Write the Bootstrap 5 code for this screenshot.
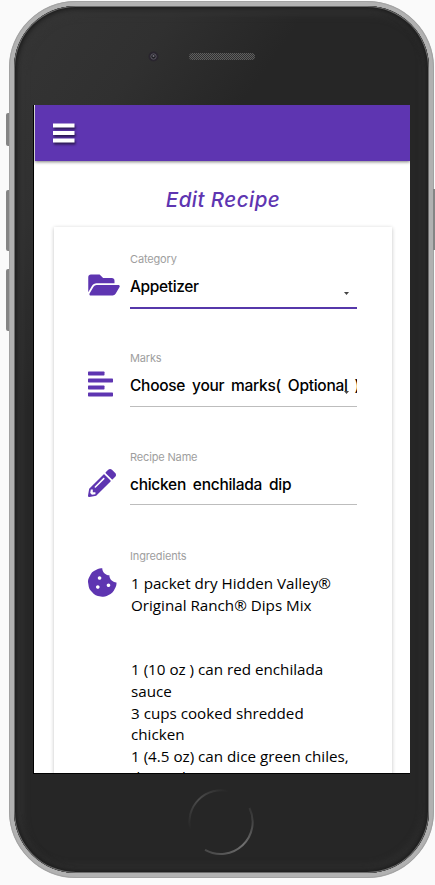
<!DOCTYPE html>
<html lang="en">
<head>
<meta charset="utf-8">
<meta name="viewport" content="width=device-width, initial-scale=1">
<title>Edit Recipe</title>
<link href="https://cdn.jsdelivr.net/npm/bootstrap@5.3.0/dist/css/bootstrap.min.css" rel="stylesheet">
<style>
  :root { --brand: #5e35b1; }
  body { background: #fafafa; height: 885px; overflow: hidden; padding: 1px 0 0 9px; }
  .phone { width: 425px; height: 877px; border: 5px solid #b1b1b1; border-radius: 67px; background: #262626;
    box-shadow: inset 0 0 0 1px #8f8f8f; outline: 1px solid #a2a2a2; outline-offset: -1px; }
  .shell { height: 100%; border-radius: 62px; padding: 99px 19px 0 19px;
    background: linear-gradient(125deg, #353535 0, #303030 16%, #262626 29%, #262626 100%);
    box-shadow: inset 0 0 0 1px #6c6c6c, inset 0 0 4px 3px #1c1c1c, inset 5px 5px 8px 2px #353535, inset -3px -5px 7px 2px #303030; }
  .side-key { position: absolute; width: 3px; background: #858585; border-radius: 2px 0 0 2px; }
  .key-mute { left: 6px; top: 113px; height: 33px; }
  .key-up { left: 6px; top: 190px; height: 61px; }
  .key-down { left: 6px; top: 269px; height: 62px; }
  .key-power { left: 433px; top: 189px; height: 61px; border-radius: 0; }
  .lens { position: absolute; left: 148px; top: 51px; width: 11px; height: 11px; }
  .speaker { position: absolute; left: 189px; top: 53px; width: 66px; height: 7px; border-radius: 4px;
    background: repeating-conic-gradient(#606060 0 25%, #303030 0 50%) 0 0 / 2px 2px; }
  .home-key { position: absolute; left: 187px; top: 788px; width: 68px; height: 68px; }
  .screen { width: 377px; height: 669px; overflow: hidden; background: #fff; border-left: 1px solid #000; border-bottom: 1px solid #000; }
  .top-bar { height: 56px; margin-left: 1px; padding: 0 0 0 18px; background: var(--brand); box-shadow: 0 1px 3px rgba(0,0,0,.5); }
  .menu-icon { filter: drop-shadow(1px 2px 1px rgba(0,0,0,.55)); }
  .page-title { font: italic 500 20.5px/28px Inter, sans-serif; color: var(--brand); margin: 25px 0 0 2px; letter-spacing: .48px; }
  .form-panel { width: 338px; height: 620px; margin: 13px 0 0 20px; padding: 22px 35px 0 34px; box-shadow: 0 1px 4px rgba(0,0,0,.24); }
  .field-row { height: 99px; }
  .icon-cell { width: 42px; padding-top: 22px; color: var(--brand); flex: none; }
  .icon-cell svg { display: block; }
  .field-body { min-width: 0; }
  .field-label { font: 11px/20px Inter, sans-serif; color: #9e9e9e; letter-spacing: -.15px; }
  .field-value { height: 38px; padding-top: 1px; font: 500 15.5px/34px Inter, sans-serif; letter-spacing: -.3px; word-spacing: 3px;
    color: #000; border-bottom: 1px solid #bdbdbd; white-space: nowrap; overflow: hidden; }
  .field-select { height: 39px; letter-spacing: -.28px; }
  .field-active { border-bottom: 2px solid #5638aa; height: 40px; letter-spacing: -.38px; }
  .field-text { letter-spacing: -.27px; }
  .caret { position: absolute; right: 8px; top: 23px; }
  .ingredients { font: 15.2px/21.6px "Open Sans", sans-serif; color: #000; white-space: pre; padding-top: 7px; margin-left: 1px; }
</style>
<script src="https://cdn.jsdelivr.net/npm/bootstrap@5.3.0/dist/js/bootstrap.bundle.min.js"></script>
</head>
<body>
<i class="side-key key-mute"></i><i class="side-key key-up"></i><i class="side-key key-down"></i>
<div class="phone">
  <div class="shell">
    <main class="screen">
      <nav class="top-bar d-flex align-items-center">
        <svg class="menu-icon" width="22" height="20" viewBox="0 0 22 20" fill="#fff"><path d="M0 .5h21.500v4H0zM0 8h21.500v4H0zM0 15.500h21.500v4H0z"/></svg>
      </nav>
      <h1 class="page-title text-center">Edit Recipe</h1>
      <section class="form-panel">
        <div class="field-row d-flex">
          <div class="icon-cell"><svg width="32" height="28" viewBox="0 0 576 512" fill="currentColor"><path d="M572.694 292.093L500.27 416.248A63.997 63.997 0 0 1 444.989 448H45.025c-18.523 0-30.064-20.093-20.731-36.093l72.424-124.155A64 64 0 0 1 152 256h399.964c18.523 0 30.064 20.093 20.73 36.093zM152 224h328v-48c0-26.510-21.490-48-48-48H272l-64-64H48C21.490 64 0 85.490 0 112v278.046l69.077-118.418C86.214 242.250 117.989 224 152 224z"/></svg></div>
          <div class="field-body flex-fill">
            <div class="field-label">Category</div>
            <div class="field-value field-active position-relative">Appetizer<svg class="caret" width="5" height="3" viewBox="0 0 5 3"><path d="M0 0h5L2.500 3z" fill="#444"/></svg></div>
          </div>
        </div>
        <div class="field-row d-flex">
          <div class="icon-cell"><svg width="25" height="28" viewBox="0 0 25 28" fill="currentColor"><rect y="1.500" width="16.500" height="4" rx=".7"/><rect y="8.500" width="25" height="4" rx=".7"/><rect y="15.500" width="16.500" height="4" rx=".7"/><rect y="22.500" width="25" height="4" rx=".7"/></svg></div>
          <div class="field-body flex-fill">
            <div class="field-label">Marks</div>
            <div class="field-value field-select position-relative">Choose your marks( Optional )<svg class="caret" width="5" height="3" viewBox="0 0 5 3"><path d="M0 0h5L2.500 3z" fill="#444"/></svg></div>
          </div>
        </div>
        <div class="field-row d-flex">
          <div class="icon-cell"><svg width="28" height="28" viewBox="0 0 512 512" fill="currentColor"><path d="M497.900 142.100l-46.100 46.100c-4.700 4.700-12.300 4.700-17 0l-111-111c-4.700-4.700-4.700-12.300 0-17l46.100-46.100c18.700-18.700 49.100-18.700 67.900 0l60.100 60.100c18.800 18.700 18.800 49.100 0 67.900zM284.200 99.800L21.600 362.400.4 483.900c-2.900 16.400 11.400 30.600 27.800 27.800l121.500-21.300 262.600-262.600c4.700-4.700 4.700-12.300 0-17l-111-111c-4.800-4.700-12.400-4.700-17.100 0zM124.100 339.900c-5.500-5.500-5.500-14.300 0-19.800l154-154c5.500-5.500 14.300-5.500 19.800 0s5.500 14.300 0 19.800l-154 154c-5.500 5.500-14.300 5.500-19.800 0zM88 424h48v36.300l-64.500 11.300-31.100-31.100L51.700 376H88v48z"/></svg></div>
          <div class="field-body flex-fill">
            <div class="field-label">Recipe Name</div>
            <div class="field-value field-text">chicken enchilada dip</div>
          </div>
        </div>
        <div class="d-flex">
          <div class="icon-cell"><svg width="28.500" height="29" viewBox="0 0 512 512" fill="currentColor"><path d="M510.520 255.820c-69.970-.85-126.470-57.690-126.470-127.860-70.170 0-127-56.490-127.860-126.450-27.260-4.140-55.130.3-79.720 12.820l-69.130 35.220a132.221 132.221 0 0 0-57.790 57.810l-35.100 68.880a132.645 132.645 0 0 0-12.820 80.950l12.080 76.270a132.521 132.521 0 0 0 37.160 72.960l54.770 54.760a132.036 132.036 0 0 0 72.710 37.060l76.710 12.150c27.510 4.360 55.700-.11 80.530-12.760l69.130-35.210a132.273 132.273 0 0 0 57.790-57.810l35.100-68.880c12.560-24.640 17.010-52.580 12.910-79.910zM176 368c-17.670 0-32-14.330-32-32s14.330-32 32-32 32 14.330 32 32-14.330 32-32 32zm32-160c-17.670 0-32-14.330-32-32s14.330-32 32-32 32 14.330 32 32-14.330 32-32 32zm160 128c-17.670 0-32-14.330-32-32s14.330-32 32-32 32 14.330 32 32-14.330 32-32 32z"/></svg></div>
          <div class="field-body flex-fill">
            <div class="field-label">Ingredients</div>
            <div class="ingredients">1 packet dry Hidden Valley®
Original Ranch® Dips Mix


1 (10 oz ) can red enchilada
sauce
3 cups cooked shredded
chicken
1 (4.5 oz) can dice green chiles,
drained</div>
          </div>
        </div>
      </section>
    </main>
  </div>
</div>
<i class="side-key key-power"></i>
<svg class="lens" viewBox="0 0 11 11"><circle cx="5.500" cy="5.500" r="5" fill="#29252e"/><circle cx="5.500" cy="5.500" r="2.700" fill="#202024" stroke="#5c5964"/><circle cx="5.500" cy="5" r="1" fill="#77747e"/></svg>
<i class="speaker"></i>
<svg class="home-key" viewBox="0 0 68 68" fill="none" stroke-width="2">
  <defs>
    <linearGradient id="arcTop" x1="0" y1="1" x2="1" y2="0"><stop offset="0" stop-color="#262626"/><stop offset=".5" stop-color="#4c4c4c"/><stop offset="1" stop-color="#262626"/></linearGradient>
    <linearGradient id="arcBottom" x1="0" y1="1" x2="1" y2="0"><stop offset="0" stop-color="#444"/><stop offset=".5" stop-color="#707070"/><stop offset="1" stop-color="#303030"/></linearGradient>
  </defs>
  <path d="M3 41A32 32 0 0 1 41 3" stroke="url(#arcTop)"/>
  <path d="M18 61.800A32 32 0 0 0 62.500 20" stroke="url(#arcBottom)"/>
</svg>
</body>
</html>
